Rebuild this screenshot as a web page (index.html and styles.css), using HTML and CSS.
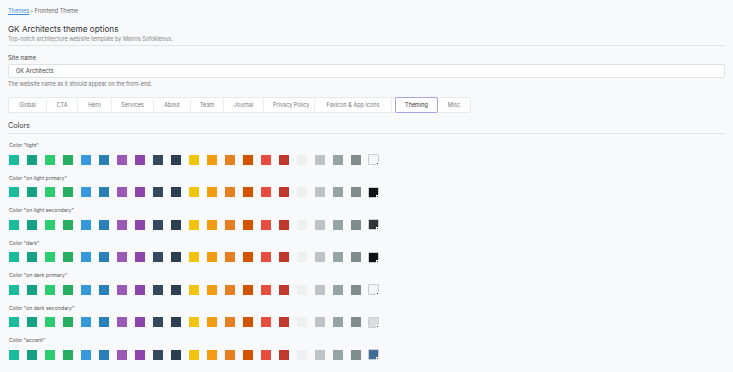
FILE: index.html
```html
<!DOCTYPE html>
<html lang="en">
<head>
    <meta charset="UTF-8">
    <title>Frontend Theme</title>
    <link rel="stylesheet" href="styles.css">
</head>
<body>
    <div class="crumbs"><a href="#">Themes</a> › Frontend Theme</div>

    <div class="page-head">
        <h1>GK Architects theme options</h1>
        <p>Top-notch architecture website template by Marios Sofokleous.</p>
    </div>

    <div class="field">
        <label>Site name</label>
        <div class="input">GK Architects</div>
        <div class="help">The website name as it should appear on the front-end.</div>
    </div>

    <div class="tabs">
        <span class="tab">Global</span>
        <span class="tab">CTA</span>
        <span class="tab">Hero</span>
        <span class="tab">Services</span>
        <span class="tab">About</span>
        <span class="tab">Team</span>
        <span class="tab">Journal</span>
        <span class="tab">Privacy Policy</span>
        <span class="tab">Favicon &amp; App icons</span>
        <span class="tab active">Theming</span>
        <span class="tab">Misc</span>
    </div>

    <h2 class="section">Colors</h2>

    <div id="colors"></div>

    <script>
        // flat ui palette, same for every option
        const palette = ["#1abc9c", "#16a085", "#2ecc71", "#27ae60", "#3498db", "#2980b9", "#9b59b6", "#8e44ad",
            "#34495e", "#2c3e50", "#f1c40f", "#f39c12", "#e67e22", "#d35400", "#e74c3c", "#c0392b",
            "#ecf0f1", "#bdc3c7", "#95a5a6", "#7f8c8d"];

        const options = [
            { name: "light", value: "#f4f5f6" },
            { name: "on light primary", value: "#111111" },
            { name: "on light secondary", value: "#343434" },
            { name: "dark", value: "#111111" },
            { name: "on dark primary", value: "#f4f5f6" },
            { name: "on dark secondary", value: "#dcdcdc" },
            { name: "accent", value: "#3f6c98" }
        ];

        const wrap = document.getElementById("colors");
        options.forEach(opt => {
            const row = document.createElement("div");
            row.className = "color-field";
            let html = `<div class="color-label">Color "${opt.name}"</div><div class="swatches">`;
            palette.forEach(c => {
                html += `<span class="swatch" style="background:${c}"></span>`;
            });
            html += `<span class="custom"><span class="fill" style="background:${opt.value}"></span></span></div>`;
            row.innerHTML = html;
            wrap.appendChild(row);
        });
    </script>
</body>
</html>
```

FILE: styles.css
```css
body {
    margin: 0;
    padding: 5px 8px 0;
    background-color: #f8f9fb;
    font-family: Inter, "Noto Sans", sans-serif;
    color: #333;
}
.crumbs {
    font-size: 5.6px;
    line-height: 12px;
    color: #666;
}
.crumbs a {
    color: #3d8fd6;
}
.page-head {
    margin-top: 6px;
    padding-bottom: 2px;
    border-bottom: 1px solid #e2e4e8;
}
.page-head h1 {
    margin: 0;
    font-size: 8.2px;
    font-weight: 400;
    line-height: 12px;
    color: #333;
}
.page-head p {
    margin: 0;
    font-size: 5.5px;
    line-height: 8px;
    color: #888;
}
.field {
    margin-top: 7px;
}
.field label {
    display: block;
    font-size: 6px;
    line-height: 10px;
    color: #444;
}
.input {
    margin-top: 1px;
    height: 12px;
    line-height: 12px;
    padding-left: 7px;
    background: #fff;
    border: 1px solid #e0e2e6;
    border-radius: 2px;
    font-size: 5.8px;
    color: #444;
}
.help {
    margin-top: 1px;
    font-size: 5.5px;
    line-height: 10px;
    color: #777;
}
.tabs {
    margin-top: 8px;
    display: flex;
    width: fit-content;
    background: #fff;
    border: 1px solid #e6e8ec;
    border-radius: 2px;
}
.tab {
    height: 14px;
    line-height: 14px;
    padding: 0 9px;
    font-size: 5.5px;
    color: #777;
    text-align: center;
    white-space: nowrap;
    border-right: 1px solid #eceef1;
}
.tab:last-child {
    border-right: none;
}
.tab:nth-child(1) { width: 19px; }
.tab:nth-child(2) { width: 12px; }
.tab:nth-child(3) { width: 15px; }
.tab:nth-child(4) { width: 23px; }
.tab:nth-child(5) { width: 18px; }
.tab:nth-child(6) { width: 14px; }
.tab:nth-child(7) { width: 21px; }
.tab:nth-child(8) { width: 32px; }
.tab:nth-child(9) { width: 58px; }
.tab:nth-child(10) { width: 23px; margin-left: 3px; }
.tab:nth-child(11) { width: 14px; }
.tab.active {
    color: #333;
    border: 1px solid #a7a2ec;
    margin-top: -1px;
    margin-bottom: -1px;
    border-radius: 2px;
}
.section {
    margin: 7px 0 0;
    padding-bottom: 2px;
    border-bottom: 1px solid #e2e4e8;
    font-size: 7.2px;
    font-weight: 400;
    line-height: 11px;
    color: #444;
}
#colors {
    padding-top: 6px;
}
.color-field {
    height: 32.5px;
}
.color-label {
    font-size: 5.2px;
    line-height: 10px;
    color: #555;
    padding-left: 1px;
}
.swatches {
    display: flex;
    align-items: center;
    margin-top: 4px;
    padding-left: 1px;
}
.swatch {
    width: 10px;
    height: 10px;
    margin-right: 8px;
}
.custom {
    position: relative;
    width: 9px;
    height: 9px;
    border: 1px solid #c9ccd0;
    border-radius: 1px;
    margin-left: -1px;
}
.fill {
    display: block;
    width: 9px;
    height: 9px;
}
.custom::after {
    content: "";
    position: absolute;
    right: -1px;
    bottom: -1px;
    width: 1px;
    height: 1px;
    background: #222;
    border: 1px solid #fff;
}
```
